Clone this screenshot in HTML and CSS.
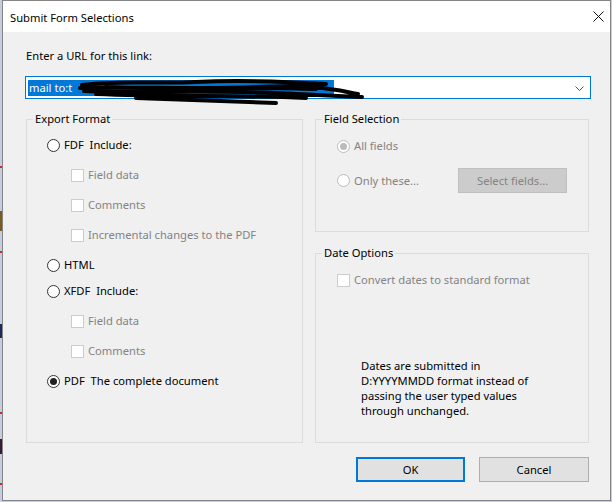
FILE: index.html
```html
<!DOCTYPE html>
<html>
<head>
<meta charset="utf-8">
<link rel="stylesheet" href="styles.css">
</head>
<body>
<div class="desk">
  <span class="mark red m1"></span>
  <span class="mark gold m2"></span>
  <span class="mark red m3"></span>
  <span class="mark navy m4"></span>
  <span class="mark red m5"></span>
  <span class="mark plum m6"></span>
  <span class="mark red m7"></span>
  <div class="window">
    <div class="titlebar">
      <span class="title">Submit Form Selections</span>
      <svg class="close" width="11" height="11" viewBox="0 0 11 11"><path d="M0.5 0.5 L10.5 10.5 M10.5 0.5 L0.5 10.5" stroke="#111" stroke-width="1" fill="none"/></svg>
    </div>
    <div class="content">
      <div class="label">Enter a URL for this link:</div>
      <div class="combo">
        <span class="sel">mail to:t</span>
        <svg class="chev" width="9" height="5" viewBox="0 0 9 5"><path d="M0.5 0.5 L4.5 4.5 L8.5 0.5" stroke="#555" stroke-width="1" fill="none"/></svg>
        <svg class="scribble" width="290" height="28" viewBox="0 0 290 28"><path d="M6 7 C40 2, 80 6, 120 4 S200 3, 250 6 M4 10 C60 8, 120 12, 180 9 S260 12, 282 16 M8 13 C70 15, 140 12, 200 15 S260 18, 286 19 M20 16 C90 19, 160 17, 230 20 M60 20 C110 22, 160 24, 200 25 M30 9 C100 12, 180 8, 240 11" stroke="#000" stroke-width="4" fill="none" stroke-linecap="round"/></svg>
      </div>
      <div class="groups">
        <div class="group export">
          <div class="legend">Export Format</div>
          <div class="rows">
            <div class="row"><span class="radio"></span><span class="txt">FDF&nbsp;&nbsp;Include:</span></div>
            <div class="row sub dis"><span class="check"></span><span class="txt">Field data</span></div>
            <div class="row sub dis"><span class="check"></span><span class="txt">Comments</span></div>
            <div class="row sub dis"><span class="check"></span><span class="txt">Incremental changes to the PDF</span></div>
            <div class="row"><span class="radio"></span><span class="txt">HTML</span></div>
            <div class="row tight"><span class="radio"></span><span class="txt">XFDF&nbsp;&nbsp;Include:</span></div>
            <div class="row sub dis"><span class="check"></span><span class="txt">Field data</span></div>
            <div class="row sub dis"><span class="check"></span><span class="txt">Comments</span></div>
            <div class="row"><span class="radio on"></span><span class="txt">PDF&nbsp;&nbsp;The complete document</span></div>
          </div>
        </div>
        <div class="rightcol">
          <div class="group fieldsel">
            <div class="legend">Field Selection</div>
            <div class="frow first dis"><span class="radio on"></span><span class="txt">All fields</span></div>
            <div class="frow second dis">
              <span class="radio"></span><span class="txt">Only these...</span>
              <span class="selbtn">Select fields...</span>
            </div>
          </div>
          <div class="group dateopt">
            <div class="legend">Date Options</div>
            <div class="frow drow dis"><span class="check"></span><span class="txt">Convert dates to standard format</span></div>
            <p class="note">Dates are submitted in<br>D:YYYYMMDD format instead of<br>passing the user typed values<br>through unchanged.</p>
          </div>
        </div>
      </div>
      <div class="buttons">
        <span class="btn ok">OK</span>
        <span class="btn cancel">Cancel</span>
      </div>
    </div>
  </div>
</div>
</body>
</html>
```
FILE: styles.css
```css
* { box-sizing: border-box; }
html, body { margin: 0; padding: 0; }
body {
  font-family: "Noto Sans", "Liberation Sans", sans-serif;
  font-size: 11.2px;
  color: #000;
}
.desk {
  position: relative;
  width: 612px;
  height: 502px;
  background: #c6cce0;
  overflow: hidden;
}
.mark { position: absolute; left: 0; width: 2px; }
.red { background: #d22; height: 2px; }
.gold { background: #7a5a20; }
.navy { background: #1c2a5a; }
.plum { background: #3a1a30; }
.m1 { top: 166px; }
.m2 { top: 211px; height: 20px; }
.m3 { top: 251px; }
.m4 { top: 324px; height: 14px; }
.m5 { top: 412px; }
.m6 { top: 439px; height: 15px; }
.m7 { top: 483px; }
.window {
  margin-left: 2px;
  width: 609px;
  height: 501px;
  border: 1px solid #858585;
  background: #f0f0f0;
  display: flex;
  flex-direction: column;
}
.titlebar {
  height: 31px;
  background: #fff;
  display: flex;
  align-items: center;
  justify-content: space-between;
  padding: 0 6px 0 7px;
  flex: none;
}
.title { margin-top: 1px; }
.close { margin-top: 0px; }
.content {
  flex: 1;
  display: flex;
  flex-direction: column;
  padding: 0 20px 0 22px;
}
.label { margin-top: 16px; line-height: 16px; padding-left: 1px; }
.combo {
  position: relative;
  margin-top: 12px;
  height: 23px;
  width: 566px;
  border: 1px solid #0078d7;
  background: #fff;
  display: flex;
  align-items: center;
  padding-left: 2px;
}
.sel {
  display: block;
  width: 306px;
  height: 16px;
  line-height: 16px;
  background: #0078d7;
  color: #fff;
  padding-left: 1px;
}
.chev { position: absolute; right: 6px; top: 9px; }
.scribble { position: absolute; left: 50px; top: 1px; }
.groups {
  margin-top: 20px;
  display: flex;
  gap: 12px;
  height: 324px;
}
.group {
  border: 1px solid #dcdcdc;
}
.legend {
  margin: -9px 0 0 6px;
  padding: 0 2px;
  width: fit-content;
  line-height: 16px;
  background: #f0f0f0;
}
.export { width: 277px; margin-left: 1px; }
.rows { margin-top: 3px; display: flex; flex-direction: column; }
.row {
  height: 30px;
  display: flex;
  align-items: center;
  padding-left: 20px;
}
.row.sub { padding-left: 44px; }
.row.tight { margin-top: -4px; }
.txt { margin-left: 4px; line-height: 16px; white-space: nowrap; }
.dis .txt { color: #838383; }
.radio {
  width: 13px;
  height: 13px;
  border: 1px solid #333;
  border-radius: 50%;
  background: #fff;
  display: flex;
  align-items: center;
  justify-content: center;
  flex: none;
}
.radio.on::after {
  content: "";
  width: 7px;
  height: 7px;
  border-radius: 50%;
  background: #222;
}
.dis .radio { border-color: #bcbcbc; }
.dis .radio.on::after { background: #bcbcbc; }
.check {
  width: 13px;
  height: 13px;
  border: 1px solid #cccccc;
  background: #fff;
  flex: none;
}
.rightcol {
  width: 274px;
  display: flex;
  flex-direction: column;
  gap: 21px;
}
.fieldsel { height: 113px; }
.dateopt { flex: 1; }
.frow {
  display: flex;
  align-items: center;
  padding-left: 21px;
}
.frow.first { margin-top: 9px; height: 20px; }
.frow.second { margin-top: 12px; height: 25px; }
.selbtn {
  margin-left: 39px;
  width: 109px;
  height: 25px;
  background: #cccccc;
  border: 1px solid #bfbfbf;
  color: #838383;
  display: flex;
  align-items: center;
  justify-content: center;
}
.frow.drow { margin-top: 11px; height: 16px; }
.note {
  margin: 70px 0 0 45px;
  line-height: 15px;
}
.buttons {
  margin-top: 14px;
  display: flex;
  justify-content: flex-end;
  gap: 14px;
  padding-right: 1px;
}
.btn {
  height: 25px;
  background: #e1e1e1;
  display: flex;
  align-items: center;
  justify-content: center;
}
.ok { width: 109px; border: 2px solid #0078d7; }
.cancel { width: 110px; border: 1px solid #adadad; }
```
